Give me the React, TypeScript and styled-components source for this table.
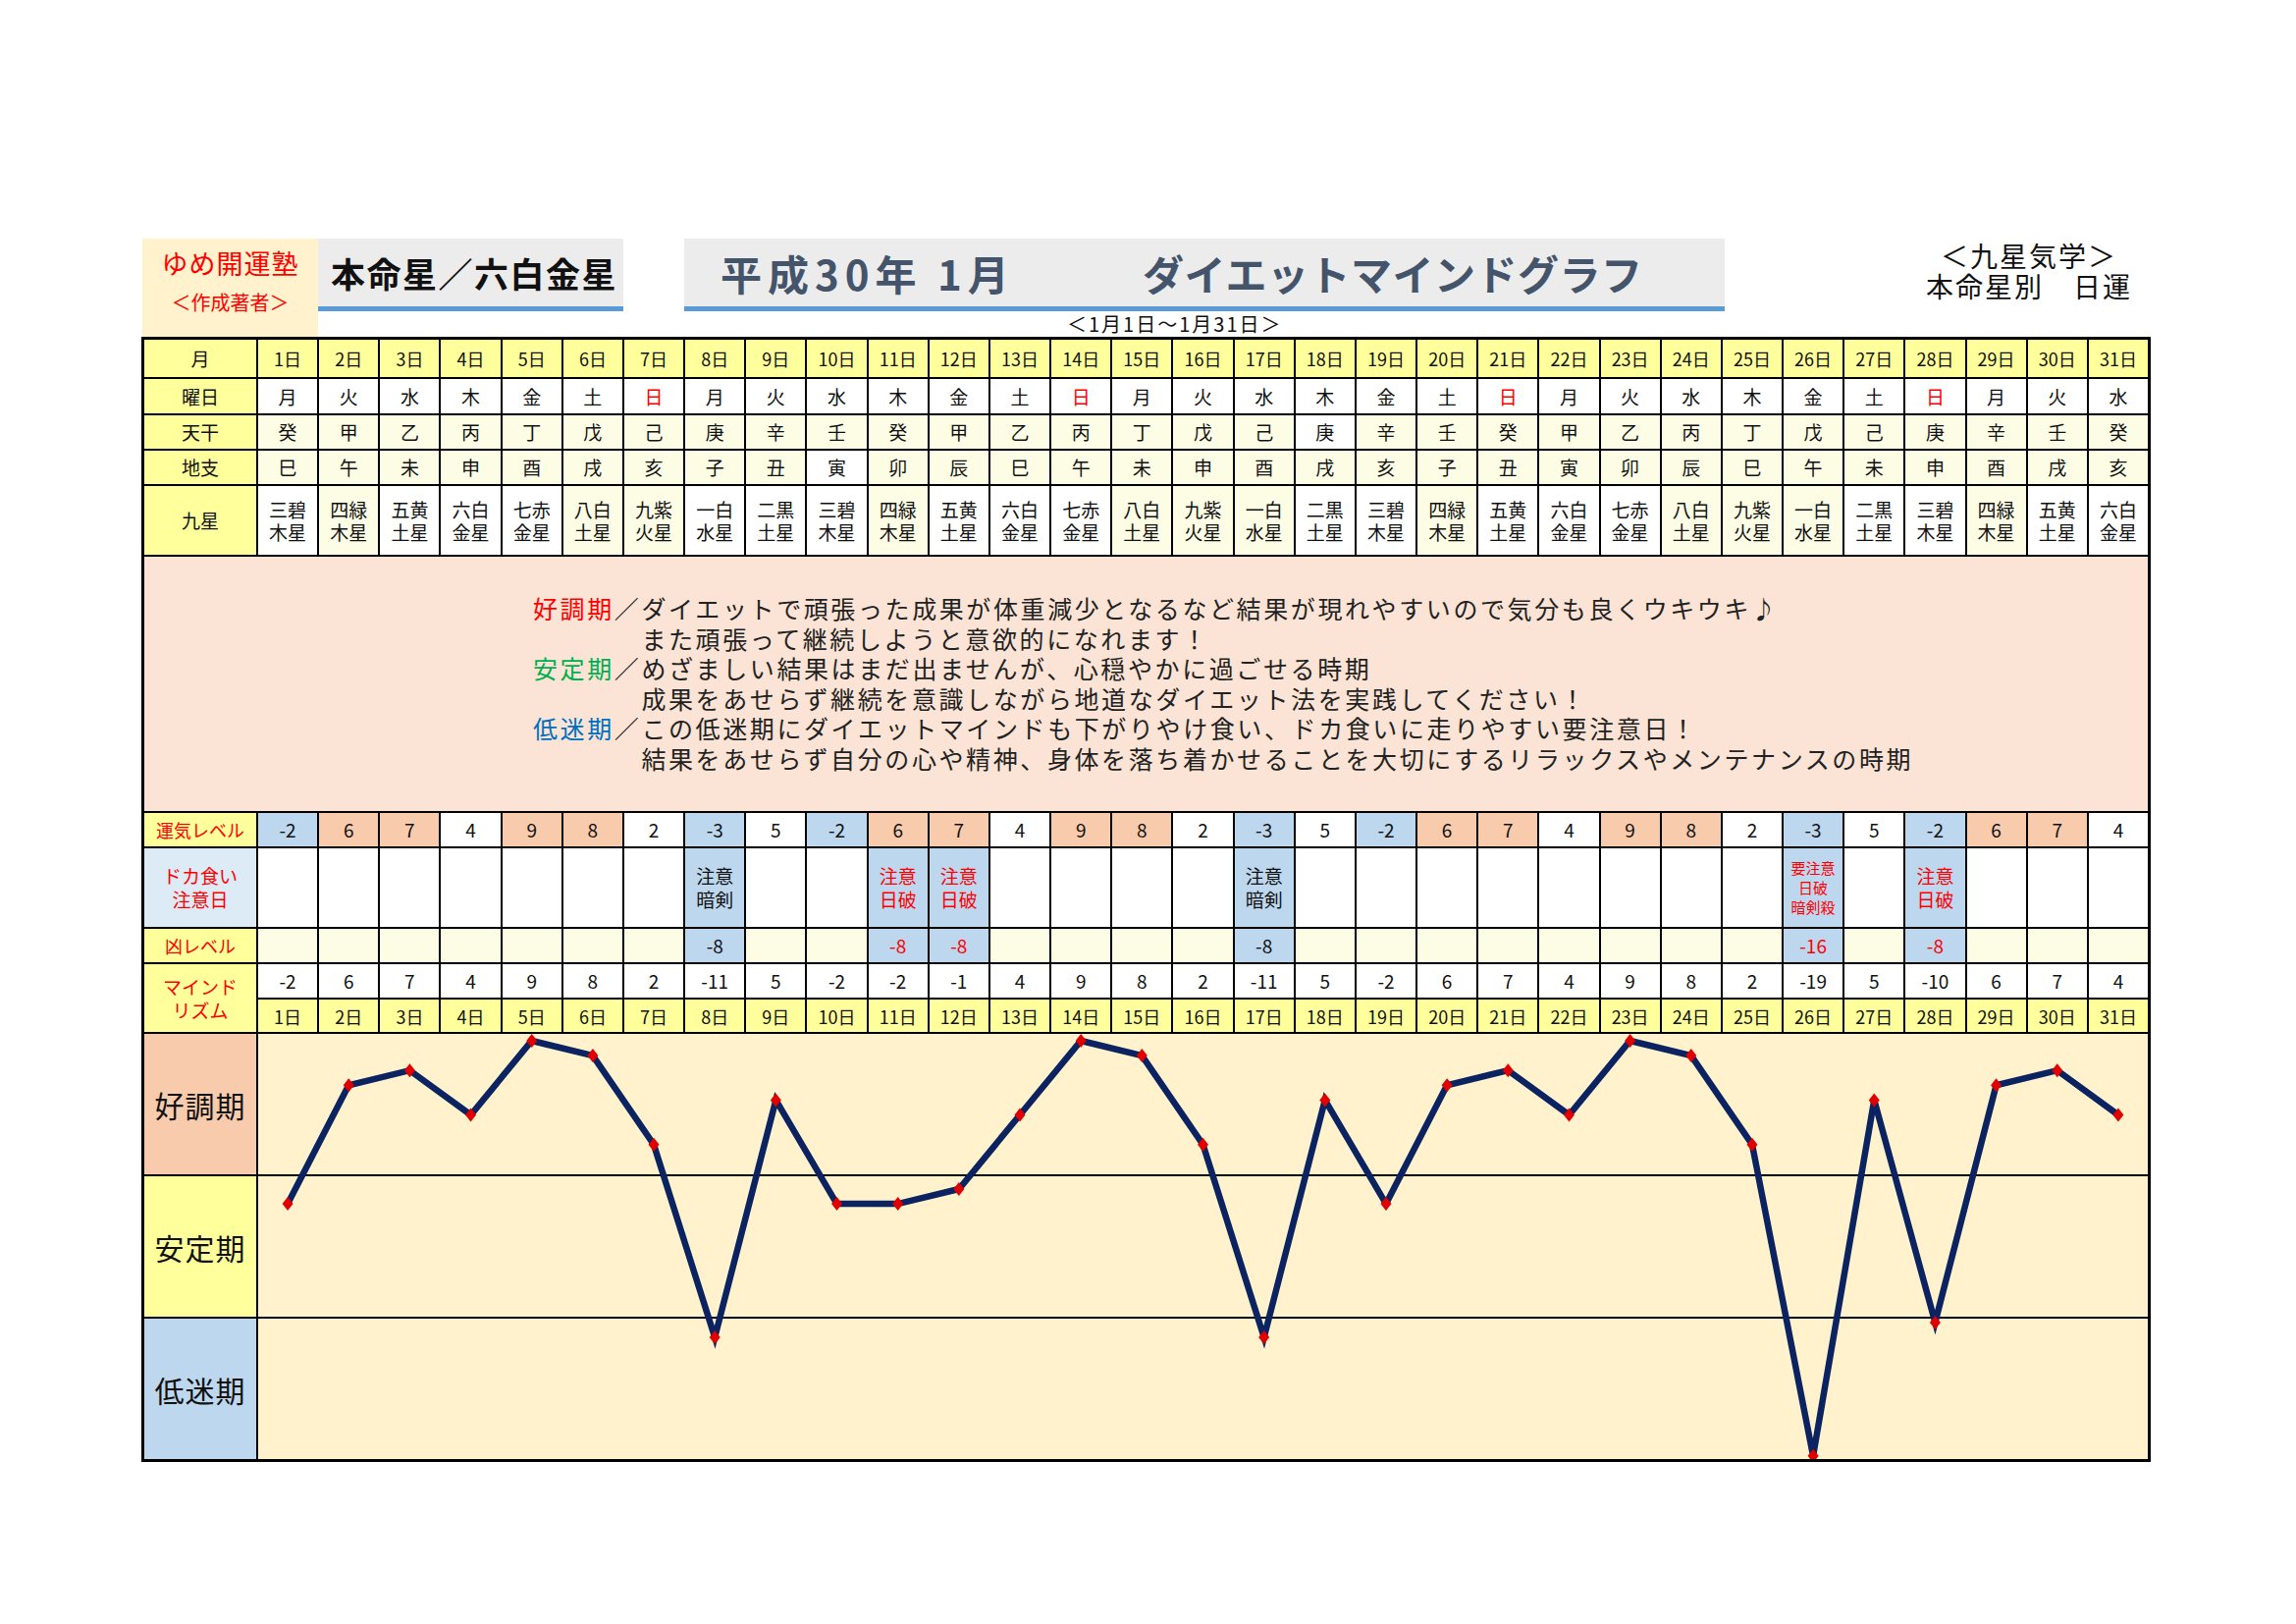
import React from 'react';
import styled, { createGlobalStyle } from 'styled-components';

const GlobalStyle = createGlobalStyle`
  html, body {
    margin: 0;
    padding: 0;
    background: #fff;
  }
  body {
    font-family: "Noto Sans CJK JP", "Noto Sans", sans-serif;
    color: #111;
  }
`;

const YELLOW = '#ffff9c';
const CREAM = '#fdfde6';
const SALMON = '#f8cbad';
const BLUE = '#bdd7ee';
const PALE_BLUE = '#ddebf7';
const RED = '#ff0000';

const Page = styled.div`
  width: 2339px;
  height: 1654px;
  box-sizing: border-box;
  padding: 243px 0 0 144px;
`;

const Header = styled.div`
  display: flex;
  width: 2047px;
  height: 100px;
`;

const Brand = styled.div`
  width: 179px;
  margin-left: 1px;
  background: #fff2cc;
  color: ${RED};
  display: flex;
  flex-direction: column;
  align-items: center;
  padding-top: 7px;
  box-sizing: border-box;
`;

const BrandName = styled.div`
  font-size: 27px;
  letter-spacing: 1px;
  line-height: 36px;
`;

const BrandSub = styled.div`
  font-size: 20px;
  line-height: 32px;
  margin-top: 6px;
`;

const Banner = styled.div<{ $width: number }>`
  width: ${p => p.$width}px;
  height: 74px;
  box-sizing: border-box;
  background: #ececec;
  border-bottom: 5px solid #5b9bd5;
  display: flex;
  align-items: center;
  white-space: nowrap;
`;

const NameText = styled.div`
  font-size: 35px;
  font-weight: 700;
  letter-spacing: 1.5px;
  padding-left: 13px;
  color: #111;
`;

const TitleCol = styled.div`
  margin-left: 62px;
  display: flex;
  flex-direction: column;
`;

const TitleDate = styled.div`
  width: 467px;
  padding-left: 37px;
  box-sizing: border-box;
  font-size: 42px;
  font-weight: 700;
  letter-spacing: 6px;
  color: #44546a;
`;

const TitleMain = styled.div`
  font-size: 42px;
  font-weight: 700;
  letter-spacing: 0.5px;
  color: #44546a;
`;

const Period = styled.div`
  font-size: 20px;
  line-height: 24px;
  letter-spacing: 2px;
  padding-left: 390px;
  margin-top: 1px;
  color: #111;
  white-space: nowrap;
`;

const Note = styled.div`
  margin-left: auto;
  width: 248px;
  text-align: center;
  font-size: 28px;
  line-height: 31px;
  letter-spacing: 2px;
  padding-top: 2px;
  white-space: nowrap;
`;

const Sheet = styled.div`
  width: 2047px;
  box-sizing: border-box;
  border: 3px solid #000;
  background: #000;
  display: grid;
  grid-template-columns: 114px repeat(31, 1fr);
  grid-template-rows: 38px 35px 34px 34px 70px 259px 34px 80px 34px 34px 33px 143px 143px 143px;
  gap: 2px;
`;

const Cell = styled.div<{ $bg?: string; $color?: string; $size?: number; $lh?: number }>`
  background: ${p => p.$bg ?? '#fff'};
  color: ${p => p.$color ?? '#111'};
  font-size: ${p => p.$size ?? 19}px;
  line-height: ${p => p.$lh ?? 24}px;
  display: flex;
  flex-direction: column;
  align-items: center;
  justify-content: center;
  text-align: center;
  white-space: nowrap;
  overflow: hidden;
`;

const Label = styled(Cell)<{ $rows?: number }>`
  grid-column: 1;
  grid-row: span ${p => p.$rows ?? 1};
`;

const PhaseLabel = styled(Label)`
  font-size: 30px;
  letter-spacing: 1px;
`;

const Memo = styled.div`
  grid-column: 1 / -1;
  background: #fbe4d5;
  padding: 37px 0 0 396px;
  font-size: 25px;
  line-height: 30.5px;
  letter-spacing: 2.6px;
  color: #222;
  white-space: nowrap;
`;

const MemoRow = styled.div`
  display: grid;
  grid-template-columns: auto 1fr;
`;

const Tag = styled.span<{ $color: string }>`
  color: ${p => p.$color};
`;

const Chart = styled.div`
  grid-column: 2 / -1;
  grid-row: span 3;
  background: #fff2cc;
`;

const ChartSvg = styled.svg`
  display: block;
  width: 100%;
  height: 100%;
`;

const days = Array.from({ length: 31 }, (_, i) => i + 1);
const weekdays = ['月', '火', '水', '木', '金', '土', '日'];
const kan = '癸甲乙丙丁戊己庚辛壬';
const shi = '巳午未申酉戌亥子丑寅卯辰';
const stars = [
  ['三碧', '木星'], ['四緑', '木星'], ['五黄', '土星'], ['六白', '金星'], ['七赤', '金星'],
  ['八白', '土星'], ['九紫', '火星'], ['一白', '水星'], ['二黒', '土星'],
];
const creamStars = new Set([2, 6, 7, 11, 15, 16, 17, 20, 24, 25, 26, 29]);
const luck = [-2, 6, 7, 4, 9, 8, 2, -3, 5, -2, 6, 7, 4, 9, 8, 2, -3, 5, -2, 6, 7, 4, 9, 8, 2, -3, 5, -2, 6, 7, 4];
const mind = [-2, 6, 7, 4, 9, 8, 2, -11, 5, -2, -2, -1, 4, 9, 8, 2, -11, 5, -2, 6, 7, 4, 9, 8, 2, -19, 5, -10, 6, 7, 4];

interface Warning {
  lines: string[];
  red: boolean;
  small?: boolean;
  level: number;
}

const warnings: Record<number, Warning> = {
  8: { lines: ['注意', '暗剣'], red: false, level: -8 },
  11: { lines: ['注意', '日破'], red: true, level: -8 },
  12: { lines: ['注意', '日破'], red: true, level: -8 },
  17: { lines: ['注意', '暗剣'], red: false, level: -8 },
  26: { lines: ['要注意', '日破', '暗剣殺'], red: true, small: true, level: -16 },
  28: { lines: ['注意', '日破'], red: true, level: -8 },
};

const luckColor = (v: number) => (v >= 6 ? SALMON : v <= -2 ? BLUE : '#fff');

// chart geometry (viewBox units = px)
const CW = 1925;
const CH = 433;
const pitch = (CW + 2) / 31;
const px = (i: number) => i * pitch + (pitch - 2) / 2;
const py = (v: number) => 7 + (9 - v) * 15.1;

const MindChart: React.FC = () => {
  const pts = mind.map((v, i) => `${px(i).toFixed(1)},${py(v).toFixed(1)}`).join(' ');
  return (
    <ChartSvg viewBox={`0 0 ${CW} ${CH}`} preserveAspectRatio="none">
      <line x1={0} y1={144} x2={CW} y2={144} stroke="#000" strokeWidth={2} />
      <line x1={0} y1={289} x2={CW} y2={289} stroke="#000" strokeWidth={2} />
      <polyline points={pts} fill="none" stroke="#0b2461" strokeWidth={6.5} strokeLinejoin="miter" />
      {mind.map((v, i) => {
        const x = px(i);
        const y = py(v);
        return (
          <path
            key={i}
            d={`M${x} ${y - 7}L${x + 5.5} ${y}L${x} ${y + 7}L${x - 5.5} ${y}Z`}
            fill="#e00000"
          />
        );
      })}
    </ChartSvg>
  );
};

const App: React.FC = () => {
  return (
    <>
      <GlobalStyle />
      <Page>
        <Header>
          <Brand>
            <BrandName>ゆめ開運塾</BrandName>
            <BrandSub>＜作成著者＞</BrandSub>
          </Brand>
          <Banner $width={311}>
            <NameText>本命星／六白金星</NameText>
          </Banner>
          <TitleCol>
            <Banner $width={1060}>
              <TitleDate>平成30年 1月</TitleDate>
              <TitleMain>ダイエットマインドグラフ</TitleMain>
            </Banner>
            <Period>＜1月1日～1月31日＞</Period>
          </TitleCol>
          <Note>
            ＜九星気学＞
            <br />
            本命星別　日運
          </Note>
        </Header>

        <Sheet>
          <Label $bg={YELLOW}>月</Label>
          {days.map(d => (
            <Cell key={d} $bg={YELLOW} $size={18}>{d}日</Cell>
          ))}

          <Label $bg={YELLOW}>曜日</Label>
          {days.map(d => {
            const w = weekdays[(d - 1) % 7];
            return (
              <Cell key={d} $color={w === '日' ? RED : undefined}>{w}</Cell>
            );
          })}

          <Label $bg={YELLOW}>天干</Label>
          {days.map(d => (
            <Cell key={d} $bg={d === 18 ? '#fff' : CREAM}>{kan[(d - 1) % 10]}</Cell>
          ))}

          <Label $bg={YELLOW}>地支</Label>
          {days.map(d => (
            <Cell key={d} $bg={d === 10 ? '#fff' : CREAM}>{shi[(d - 1) % 12]}</Cell>
          ))}

          <Label $bg={YELLOW}>九星</Label>
          {days.map(d => {
            const s = stars[(d - 1) % 9];
            return (
              <Cell key={d} $bg={creamStars.has(d) ? CREAM : '#fff'} $size={19} $lh={23}>
                <div>{s[0]}</div>
                <div>{s[1]}</div>
              </Cell>
            );
          })}

          <Memo>
            <MemoRow>
              <span><Tag $color={RED}>好調期</Tag>／</span>
              <div>
                <div>ダイエットで頑張った成果が体重減少となるなど結果が現れやすいので気分も良くウキウキ♪</div>
                <div>また頑張って継続しようと意欲的になれます！</div>
              </div>
            </MemoRow>
            <MemoRow>
              <span><Tag $color="#00b050">安定期</Tag>／</span>
              <div>
                <div>めざましい結果はまだ出ませんが、心穏やかに過ごせる時期</div>
                <div>成果をあせらず継続を意識しながら地道なダイエット法を実践してください！</div>
              </div>
            </MemoRow>
            <MemoRow>
              <span><Tag $color="#0070c0">低迷期</Tag>／</span>
              <div>
                <div>この低迷期にダイエットマインドも下がりやけ食い、ドカ食いに走りやすい要注意日！</div>
                <div>結果をあせらず自分の心や精神、身体を落ち着かせることを大切にするリラックスやメンテナンスの時期</div>
              </div>
            </MemoRow>
          </Memo>

          <Label $bg={YELLOW} $color={RED} $size={18}>運気レベル</Label>
          {luck.map((v, i) => (
            <Cell key={i} $bg={luckColor(v)}>{v}</Cell>
          ))}

          <Label $bg={PALE_BLUE} $color={RED} $size={19}>
            <div>ドカ食い</div>
            <div>注意日</div>
          </Label>
          {days.map(d => {
            const w = warnings[d];
            if (!w) return <Cell key={d} />;
            return (
              <Cell
                key={d}
                $bg={BLUE}
                $color={w.red ? RED : undefined}
                $size={w.small ? 15 : 19}
                $lh={w.small ? 20 : 24}
              >
                {w.lines.map(l => (
                  <div key={l}>{l}</div>
                ))}
              </Cell>
            );
          })}

          <Label $bg={YELLOW} $color={RED} $size={18}>凶レベル</Label>
          {days.map(d => {
            const w = warnings[d];
            if (!w) return <Cell key={d} $bg={CREAM} />;
            return (
              <Cell key={d} $bg={BLUE} $color={w.red ? RED : undefined}>{w.level}</Cell>
            );
          })}

          <Label $bg={YELLOW} $color={RED} $rows={2} $size={19}>
            <div>マインド</div>
            <div>リズム</div>
          </Label>
          {mind.map((v, i) => (
            <Cell key={i}>{v}</Cell>
          ))}
          {days.map(d => (
            <Cell key={d} $bg={YELLOW} $size={18}>{d}日</Cell>
          ))}

          <PhaseLabel $bg={SALMON}>好調期</PhaseLabel>
          <Chart>
            <MindChart />
          </Chart>
          <PhaseLabel $bg={YELLOW}>安定期</PhaseLabel>
          <PhaseLabel $bg={BLUE}>低迷期</PhaseLabel>
        </Sheet>
      </Page>
    </>
  );
};

export default App;
